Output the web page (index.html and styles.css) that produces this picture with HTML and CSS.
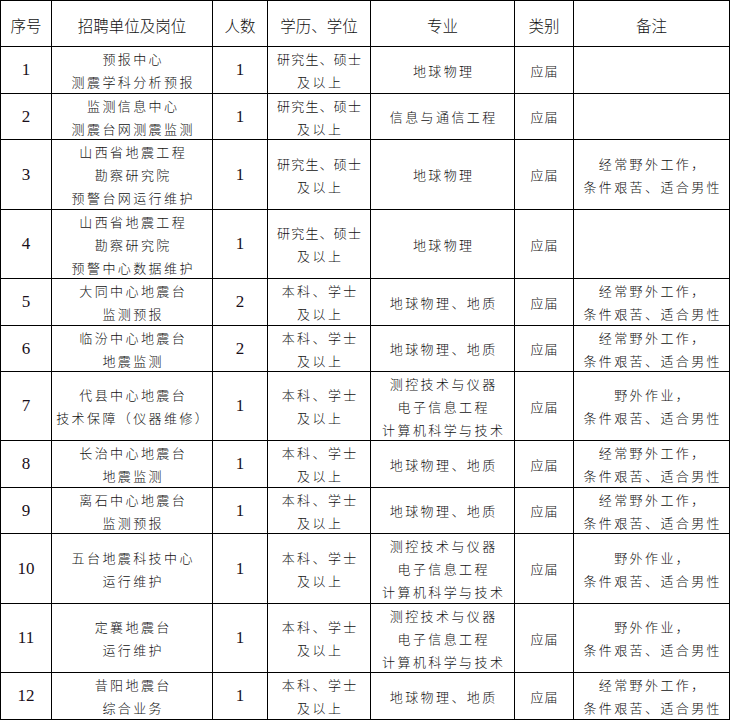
FILE: index.html
```html
<!DOCTYPE html>
<html lang="zh-CN">
<head>
<meta charset="utf-8">
<title>招聘岗位</title>
<link rel="stylesheet" href="styles.css">
</head>
<body>
<div class="table">
  <div class="cell head">序号</div>
  <div class="cell head">招聘单位及岗位</div>
  <div class="cell head">人数</div>
  <div class="cell head">学历、学位</div>
  <div class="cell head">专业</div>
  <div class="cell head">类别</div>
  <div class="cell head">备注</div>

  <div class="cell num">1</div>
  <div class="cell txt"><span>预报中心</span><span>测震学科分析预报</span></div>
  <div class="cell num">1</div>
  <div class="cell txt tight"><span>研究生、硕士</span><span class="wide">及以上</span></div>
  <div class="cell txt"><span>地球物理</span></div>
  <div class="cell txt cat"><span>应届</span></div>
  <div class="cell"></div>

  <div class="cell num">2</div>
  <div class="cell txt"><span>监测信息中心</span><span>测震台网测震监测</span></div>
  <div class="cell num">1</div>
  <div class="cell txt tight"><span>研究生、硕士</span><span class="wide">及以上</span></div>
  <div class="cell txt"><span>信息与通信工程</span></div>
  <div class="cell txt cat"><span>应届</span></div>
  <div class="cell"></div>

  <div class="cell num">3</div>
  <div class="cell txt"><span>山西省地震工程</span><span>勘察研究院</span><span>预警台网运行维护</span></div>
  <div class="cell num">1</div>
  <div class="cell txt tight"><span>研究生、硕士</span><span class="wide">及以上</span></div>
  <div class="cell txt"><span>地球物理</span></div>
  <div class="cell txt cat"><span>应届</span></div>
  <div class="cell txt"><span>经常野外工作，</span><span>条件艰苦、适合男性</span></div>

  <div class="cell num">4</div>
  <div class="cell txt"><span>山西省地震工程</span><span>勘察研究院</span><span>预警中心数据维护</span></div>
  <div class="cell num">1</div>
  <div class="cell txt tight"><span>研究生、硕士</span><span class="wide">及以上</span></div>
  <div class="cell txt"><span>地球物理</span></div>
  <div class="cell txt cat"><span>应届</span></div>
  <div class="cell"></div>

  <div class="cell num">5</div>
  <div class="cell txt"><span>大同中心地震台</span><span>监测预报</span></div>
  <div class="cell num">2</div>
  <div class="cell txt"><span>本科、学士</span><span>及以上</span></div>
  <div class="cell txt"><span>地球物理、地质</span></div>
  <div class="cell txt cat"><span>应届</span></div>
  <div class="cell txt"><span>经常野外工作，</span><span>条件艰苦、适合男性</span></div>

  <div class="cell num">6</div>
  <div class="cell txt"><span>临汾中心地震台</span><span>地震监测</span></div>
  <div class="cell num">2</div>
  <div class="cell txt"><span>本科、学士</span><span>及以上</span></div>
  <div class="cell txt"><span>地球物理、地质</span></div>
  <div class="cell txt cat"><span>应届</span></div>
  <div class="cell txt"><span>经常野外工作，</span><span>条件艰苦、适合男性</span></div>

  <div class="cell num">7</div>
  <div class="cell txt"><span>代县中心地震台</span><span>技术保障（仪器维修）</span></div>
  <div class="cell num">1</div>
  <div class="cell txt"><span>本科、学士</span><span>及以上</span></div>
  <div class="cell txt"><span>测控技术与仪器</span><span>电子信息工程</span><span>计算机科学与技术</span></div>
  <div class="cell txt cat"><span>应届</span></div>
  <div class="cell txt"><span>野外作业，</span><span>条件艰苦、适合男性</span></div>

  <div class="cell num">8</div>
  <div class="cell txt"><span>长治中心地震台</span><span>地震监测</span></div>
  <div class="cell num">1</div>
  <div class="cell txt"><span>本科、学士</span><span>及以上</span></div>
  <div class="cell txt"><span>地球物理、地质</span></div>
  <div class="cell txt cat"><span>应届</span></div>
  <div class="cell txt"><span>经常野外工作，</span><span>条件艰苦、适合男性</span></div>

  <div class="cell num">9</div>
  <div class="cell txt"><span>离石中心地震台</span><span>监测预报</span></div>
  <div class="cell num">1</div>
  <div class="cell txt"><span>本科、学士</span><span>及以上</span></div>
  <div class="cell txt"><span>地球物理、地质</span></div>
  <div class="cell txt cat"><span>应届</span></div>
  <div class="cell txt"><span>经常野外工作，</span><span>条件艰苦、适合男性</span></div>

  <div class="cell num">10</div>
  <div class="cell txt"><span>五台地震科技中心</span><span>运行维护</span></div>
  <div class="cell num">1</div>
  <div class="cell txt"><span>本科、学士</span><span>及以上</span></div>
  <div class="cell txt"><span>测控技术与仪器</span><span>电子信息工程</span><span>计算机科学与技术</span></div>
  <div class="cell txt cat"><span>应届</span></div>
  <div class="cell txt"><span>野外作业，</span><span>条件艰苦、适合男性</span></div>

  <div class="cell num">11</div>
  <div class="cell txt"><span>定襄地震台</span><span>运行维护</span></div>
  <div class="cell num">1</div>
  <div class="cell txt"><span>本科、学士</span><span>及以上</span></div>
  <div class="cell txt"><span>测控技术与仪器</span><span>电子信息工程</span><span>计算机科学与技术</span></div>
  <div class="cell txt cat"><span>应届</span></div>
  <div class="cell txt"><span>野外作业，</span><span>条件艰苦、适合男性</span></div>

  <div class="cell num">12</div>
  <div class="cell txt"><span>昔阳地震台</span><span>综合业务</span></div>
  <div class="cell num">1</div>
  <div class="cell txt"><span>本科、学士</span><span>及以上</span></div>
  <div class="cell txt"><span>地球物理、地质</span></div>
  <div class="cell txt cat"><span>应届</span></div>
  <div class="cell txt"><span>经常野外工作，</span><span>条件艰苦、适合男性</span></div>
</div>
</body>
</html>
```

FILE: styles.css
```css
html, body {
  margin: 0;
  padding: 0;
  background: #fff;
}

body {
  font-family: "Noto Sans CJK SC", "Noto Sans", sans-serif;
  color: #111;
}

.table {
  display: grid;
  grid-template-columns: 50px 160px 54px 102px 143px 58px 155px;
  grid-template-rows: 45px 46px 45px 69px 68px 46px 45px 68px 46px 45px 69px 68px 46px;
  gap: 1px;
  width: max-content;
  background: #000;
  border: 1px solid #000;
}

.cell {
  background: #fff;
  display: flex;
  flex-direction: column;
  align-items: center;
  justify-content: center;
  text-align: center;
  white-space: nowrap;
}

.head {
  font-size: 15.5px;
  font-weight: 300;
  padding-top: 3px;
  box-sizing: border-box;
}

.num {
  font-family: "Liberation Serif", "Times New Roman", serif;
  font-size: 17px;
  color: #1a0f1a;
}

.txt {
  font-size: 13px;
  font-weight: 300;
  line-height: 23px;
}

.txt span {
  display: block;
  letter-spacing: 2.4px;
  padding-left: 2.4px;
}

.tight span {
  letter-spacing: 1.2px;
  padding-left: 1.2px;
}

.tight span.wide {
  letter-spacing: 2.5px;
  padding-left: 2.5px;
}

.cat span {
  letter-spacing: 1px;
  padding-left: 1px;
}
```
